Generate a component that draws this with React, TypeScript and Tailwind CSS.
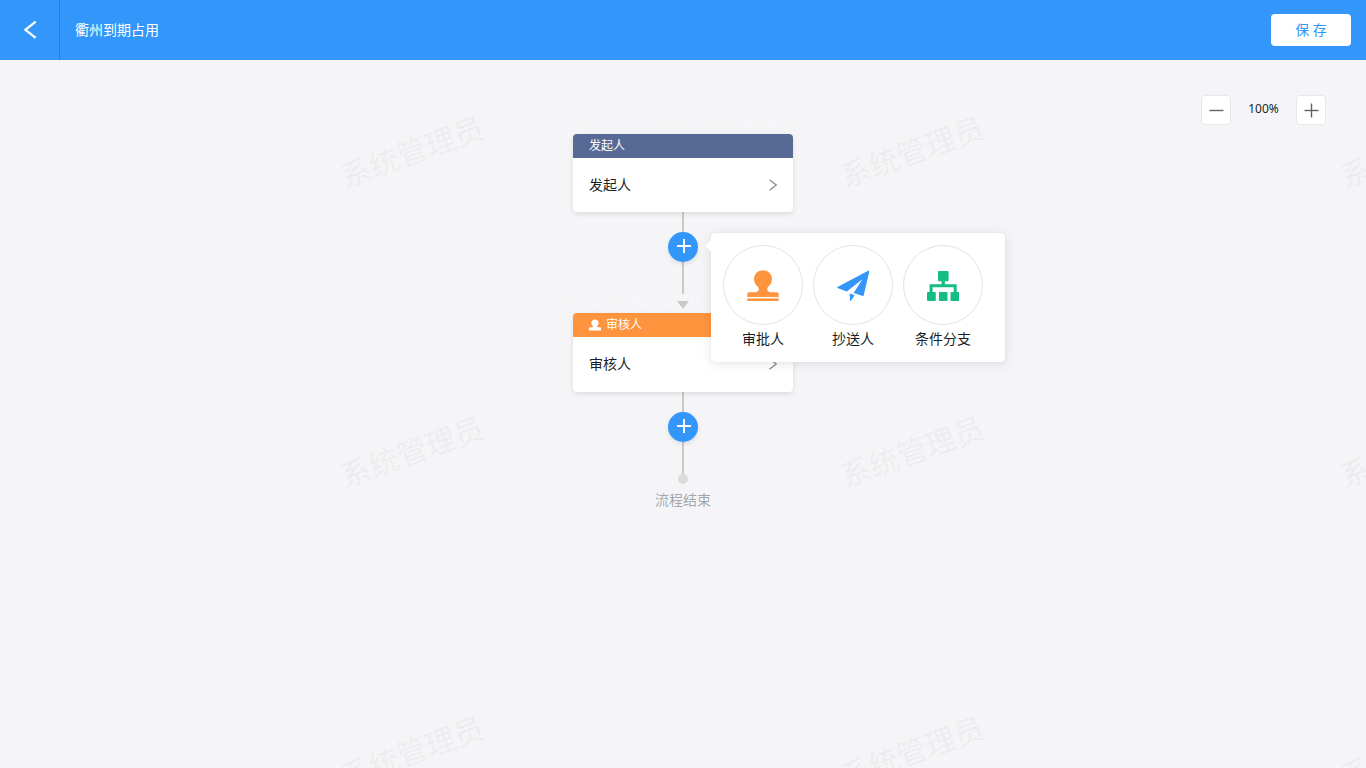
import type { ReactNode } from 'react';

function BackIcon() {
  return (
    <svg width="14" height="20" viewBox="0 0 14 20" fill="none" stroke="currentColor" strokeWidth="2.3">
      <path d="M12.700 1.700 2.400 9.800l10.300 8.100" />
    </svg>
  );
}

function ChevronIcon() {
  return (
    <svg width="8" height="12" viewBox="0 0 8 12" fill="none" stroke="#8c8c8c" strokeWidth="1.2">
      <path d="M.5.7 7.2 6 .5 11.3" />
    </svg>
  );
}

function StampIcon({ className }: { className: string }) {
  return (
    <svg className={className} viewBox="0 0 32 33" fill="currentColor">
      <path d="M16 1.200c5.200 0 9 3.900 9 8.900 0 3-1.300 5.300-3 7-1.200 1.200-1.800 2-1.800 3 0 2 1.500 3.200 3.500 3.200h6.100c1.200 0 1.900.8 1.900 2V28H.3v-2.700c0-1.200.7-2 1.900-2h6.100c2 0 3.500-1.200 3.500-3.200 0-1-.6-1.800-1.800-3-1.700-1.700-3-4-3-7 0-5 3.800-8.900 9-8.900Z" />
      <rect x=".3" y="29.400" width="31.400" height="2.600" />
    </svg>
  );
}

function SmallStampIcon() {
  return (
    <svg className="mr-px size-3" viewBox="0 0 12 12" fill="currentColor">
      <path d="M6 .5c2.200 0 3.700 1.500 3.700 3.500 0 1.700-1.600 2.600-1.600 3.400 0 .5.5.8 1.200.8h1.700c.6 0 1 .4 1 1v2.300H0V9.200c0-.6.4-1 1-1h1.700c.7 0 1.200-.3 1.200-.8 0-.8-1.600-1.700-1.600-3.400C2.300 2 3.800.5 6 .5Z" />
    </svg>
  );
}

function PlaneIcon({ className }: { className: string }) {
  return (
    <svg className={className} viewBox="0 0 32 33" fill="currentColor">
      <path d="M31.600 1.600c.5-.3.9 0 .8.5l-5.800 24.600c-.1.400-.4.500-.8.400l-9.200-3.200L25.400 10.200 9.800 22.600.5 18.900c-.6-.2-.6-.6 0-.9Z" />
      <path d="m12.700 24.400 5 1.900-3.800 5.400c-.4.500-.9.400-.9-.2Z" />
    </svg>
  );
}

function TreeIcon({ className }: { className: string }) {
  return (
    <svg className={className} viewBox="0 0 32 33" fill="currentColor">
      <rect x="11" y="2" width="10.600" height="10.300" rx="1" />
      <path d="M14.500 12h3.400v3.300h11.800V23h-3v-4.800H5.600V23h-3v-7.700h11.900Z" />
      <rect x="0" y="23" width="8.800" height="9" rx="1" />
      <rect x="11.900" y="23" width="8.600" height="9" rx="1" />
      <rect x="23.500" y="23" width="8.800" height="9" rx="1" />
    </svg>
  );
}

function PlusIcon() {
  return (
    <svg width="16" height="16" viewBox="0 0 16 16" stroke="currentColor">
      <path d="M1 8h14M8 1v14" strokeWidth="2" />
    </svg>
  );
}

function ZoomIcon({ plus }: { plus?: boolean }) {
  return (
    <svg width="15" height="15" viewBox="0 0 15 15" stroke="#5f6368" strokeWidth="1.4">
      <path d="M.5 7.500h14" />
      {plus && <path d="M7.500.5v14" />}
    </svg>
  );
}

function Watermark() {
  return (
    <div aria-hidden="true" className="pointer-events-none absolute inset-0 overflow-hidden">
      {[0, 1, 2].map((row) => (
        <div key={row} className="flex h-[300px] -translate-y-[59px] pl-[162px]">
          {[0, 1, 2].map((col) => (
            <div key={col} className="flex w-[500px] shrink-0 items-center justify-center">
              <span className="-rotate-20 text-[30px] font-medium text-black/4">系统管理员</span>
            </div>
          ))}
        </div>
      ))}
    </div>
  );
}

type NodeProps = {
  id: string;
  title: string;
  text: string;
  titleClass: string;
  bodyClass: string;
  icon?: ReactNode;
};

function FlowNode({ id, title, text, titleClass, bodyClass, icon }: NodeProps) {
  return (
    <div className="relative w-[220px]">
      <span className="absolute bottom-full left-1/2 -translate-x-1/2 text-xs leading-[22px] whitespace-nowrap text-[#f8f8fa]">
        {id}
      </span>
      <button type="button" className="relative block w-full rounded bg-white text-left shadow-[0_2px_5px_rgba(0,0,0,0.1)]">
        <span className={`flex h-6 items-center gap-1 rounded-t px-4 text-xs text-white ${titleClass}`}>
          {icon}
          {title}
        </span>
        <span className={`flex items-center justify-between px-4 text-sm text-[#191f25] ${bodyClass}`}>
          {text}
          <ChevronIcon />
        </span>
      </button>
    </div>
  );
}

const choices = [
  { label: '审批人', color: 'text-[#ff943e]', Icon: StampIcon },
  { label: '抄送人', color: 'text-[#3296fa]', Icon: PlaneIcon },
  { label: '条件分支', color: 'text-[#15bc83]', Icon: TreeIcon },
];

function NodeMenu() {
  return (
    <div className="absolute top-px left-[43px] z-20 flex rounded bg-white px-3 pt-3 pb-[10px] shadow-[0_0_1px_rgba(60,70,120,0.2),0_2px_12px_rgba(0,0,40,0.1)]">
      <span className="absolute top-[9px] -left-1 size-2 rotate-45 bg-white" />
      {choices.map(({ label, color, Icon }) => (
        <button key={label} type="button" className="mr-[10px] w-20 text-center text-sm leading-[27px] text-[#191f25]">
          <span className={`flex size-20 items-center justify-center rounded-full border border-[#e2e2e2] ${color}`}>
            <Icon className="h-[33px] w-8" />
          </span>
          {label}
        </button>
      ))}
    </div>
  );
}

function AddStep({ children }: { children?: ReactNode }) {
  return (
    <div className="flex flex-col items-center">
      <div className="h-5 w-0.5 bg-[#cacaca]" />
      <div className="relative">
        <button
          type="button"
          aria-label="添加节点"
          className="flex size-[30px] items-center justify-center rounded-full bg-[#3296fa] pb-0.5 pl-0.5 text-white shadow-[0_2px_4px_rgba(0,0,0,0.1)]"
        >
          <PlusIcon />
        </button>
        {children}
      </div>
      <div className="h-8 w-0.5 bg-[#cacaca]" />
    </div>
  );
}

export default function App() {
  return (
    <div className="flex min-h-screen flex-col bg-[#f5f5f7] font-['Noto_Sans','Noto_Sans_CJK_SC',sans-serif] text-[#191f25]">
      <header className="flex h-[60px] items-center bg-[#3296fa] text-sm text-white">
        <button type="button" aria-label="返回" className="flex h-full w-[60px] items-center justify-center border-r border-[#1583f2]">
          <BackIcon />
        </button>
        <h1 className="ml-[15px] flex-1">衢州到期占用</h1>
        <button type="button" className="mr-[15px] h-8 w-20 rounded bg-white text-[#3296fa]">
          保 存
        </button>
      </header>

      <main className="relative flex-1">
        <div className="flex justify-end pt-[35px] pr-10">
          <button type="button" aria-label="缩小" className="flex size-[30px] items-center justify-center rounded-sm border border-[#e8e8ea] bg-white">
            <ZoomIcon />
          </button>
          <span className="w-[65px] text-center text-xs leading-[28px]">100%</span>
          <button type="button" aria-label="放大" className="flex size-[30px] items-center justify-center rounded-sm border border-[#e8e8ea] bg-white">
            <ZoomIcon plus />
          </button>
        </div>

        <div className="flex flex-col items-center pt-[9px]">
          <FlowNode
            id="5aa78e5e-e132-4a7d-97a5-3ed0855a8a5c"
            title="发起人"
            text="发起人"
            titleClass="bg-[#576a95]"
            bodyClass="h-[54px]"
          />
          <AddStep>
            <NodeMenu />
          </AddStep>
          <svg className="relative z-10 mt-[7px] mb-1" width="12" height="8" viewBox="0 0 12 8" fill="#cacaca">
            <path d="M0 0h12L6 8Z" />
          </svg>
          <FlowNode
            id="1ca5ae59-7468-4d07-81e3-5c0d8a7e96b2"
            title="审核人"
            text="审核人"
            titleClass="bg-[#ff943e]"
            bodyClass="h-[55px] pb-0.5"
            icon={<SmallStampIcon />}
          />
          <AddStep />
          <div className="size-[10px] rounded-full bg-[#dbdcdc]" />
          <p className="mt-1 text-sm leading-6 text-[#191f25]/40">流程结束</p>
        </div>

        <Watermark />
      </main>
    </div>
  );
}
